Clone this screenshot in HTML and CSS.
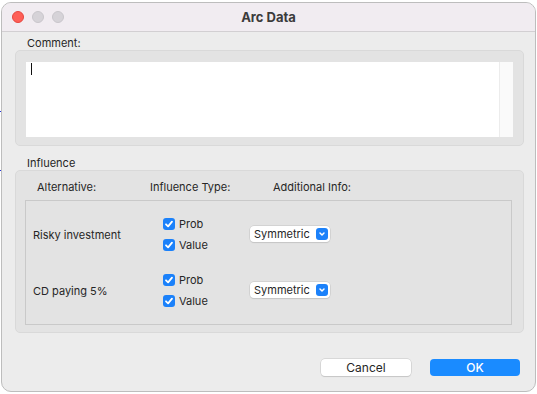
FILE: index.html
```html
<!DOCTYPE html>
<html>
<head>
  <meta charset="utf-8">
  <title>Arc Data</title>
  <link rel="stylesheet" href="styles.css">
</head>
<body>

  <div class="behind">
    <span class="mark mark-a"></span>
    <span class="mark mark-b"></span>
  </div>

  <div class="window">

    <div class="titlebar">
      <div class="lights">
        <span class="light red"></span>
        <span class="light"></span>
        <span class="light"></span>
      </div>
      <div class="title">Arc Data</div>
    </div>

    <div class="content">

      <p class="caption">Comment:</p>
      <div class="group comment-group">
        <div class="textarea">
          <div class="text"><span class="caret"></span></div>
          <div class="scroller"></div>
        </div>
      </div>

      <p class="caption influence-caption">Influence</p>
      <div class="group influence-group">
        <div class="heads">
          <span class="head head-alt">Alternative:</span>
          <span class="head head-type">Influence Type:</span>
          <span class="head">Additional Info:</span>
        </div>
        <div class="table">

          <div class="row">
            <span class="alt">Risky investment</span>
            <div class="checks">
              <label class="check"><span class="box"><svg viewBox="0 0 12 12"><path d="M3 6.3 L5.1 8.4 L9 3.6" /></svg></span>Prob</label>
              <label class="check"><span class="box"><svg viewBox="0 0 12 12"><path d="M3 6.3 L5.1 8.4 L9 3.6" /></svg></span>Value</label>
            </div>
            <div class="popup">
              <span>Symmetric</span>
              <span class="arrow"><svg viewBox="0 0 12 12"><path d="M4 5 L6 7 L8 5" /></svg></span>
            </div>
          </div>

          <div class="row">
            <span class="alt">CD paying 5%</span>
            <div class="checks">
              <label class="check"><span class="box"><svg viewBox="0 0 12 12"><path d="M3 6.3 L5.1 8.4 L9 3.6" /></svg></span>Prob</label>
              <label class="check"><span class="box"><svg viewBox="0 0 12 12"><path d="M3 6.3 L5.1 8.4 L9 3.6" /></svg></span>Value</label>
            </div>
            <div class="popup">
              <span>Symmetric</span>
              <span class="arrow"><svg viewBox="0 0 12 12"><path d="M4 5 L6 7 L8 5" /></svg></span>
            </div>
          </div>

        </div>
      </div>

      <div class="buttons">
        <button class="btn">Cancel</button>
        <button class="btn default">OK</button>
      </div>

    </div>
  </div>

</body>
</html>
```

FILE: styles.css
```css
* {
  box-sizing: border-box;
}
body {
  margin: 0px;
  background-color: #fff;
  font-family: Inter, 'Liberation Sans', sans-serif;
  font-size: 11px;
  color: #262626;
  height: 394px;
  overflow: hidden;
  position: relative;
}
.behind {
  position: absolute;
  left: 0px;
  top: 0px;
  width: 3px;
  height: 394px;
}
.mark {
  position: absolute;
  left: 0px;
  width: 2px;
  height: 1px;
  background: #2233dd;
}
.mark-a {
  top: 111px;
}
.mark-b {
  top: 170px;
}
.window {
  position: relative;
  margin: 2px 1px 0px 1px;
  height: 390px;
  border: 1px solid #bdbdbd;
  border-radius: 10px;
  background: #ececec;
  overflow: hidden;
  display: flex;
  flex-direction: column;
}
.titlebar {
  height: 29px;
  flex: none;
  background: #f1ecf1;
  border-bottom: 1px solid #d2cfd2;
  display: flex;
  align-items: center;
  position: relative;
}
.lights {
  display: flex;
  gap: 8px;
  padding-left: 10px;
}
.light {
  width: 12px;
  height: 12px;
  border-radius: 50%;
  background: #d6d3d8;
  border: 1px solid #c9c6cb;
}
.light.red {
  background: #fe5f57;
  border-color: #e5463f;
}
.title {
  position: absolute;
  left: 0px;
  right: 0px;
  text-align: center;
  font-size: 13px;
  font-weight: 700;
  color: #3b3b3b;
}
.content {
  padding: 0px 11px 0px 13px;
  flex: 1;
  display: flex;
  flex-direction: column;
}
.caption {
  margin: 5px 0px 0px 12px;
  height: 13px;
  line-height: 13px;
}
.group {
  background: #e3e3e3;
  border: 1px solid #d9d9d9;
  border-radius: 5px;
  flex: none;
}
.comment-group {
  height: 96px;
  padding: 11px 10px 8px 10px;
}
.textarea {
  display: flex;
  height: 75px;
  background: #fff;
}
.text {
  flex: 1;
  padding: 1px 0px 0px 5px;
}
.caret {
  display: block;
  width: 1px;
  height: 12px;
  background: #111;
}
.scroller {
  width: 14px;
  background: #fafafa;
  border-left: 1px solid #ececec;
}
.influence-caption {
  margin-top: 10px;
  height: 14px;
  line-height: 14px;
}
.influence-group {
  height: 163px;
  padding: 0px 11px 0px 9px;
}
.heads {
  display: flex;
  height: 29px;
  align-items: center;
  padding: 3px 0px 0px 12px;
}
.head-alt {
  width: 113px;
}
.head-type {
  width: 123px;
}
.table {
  border: 1px solid #c9c9c9;
  height: 125px;
  padding: 17px 0px 0px 7px;
  display: flex;
  flex-direction: column;
  gap: 23px;
}
.row {
  display: flex;
  align-items: center;
  height: 33px;
}
.alt {
  width: 130px;
}
.checks {
  width: 87px;
  display: flex;
  flex-direction: column;
  gap: 9px;
}
.check {
  display: flex;
  align-items: center;
  height: 12px;
  gap: 4px;
}
.box {
  width: 12px;
  height: 12px;
  border-radius: 3px;
  background: #1b81fa;
  display: flex;
}
.box svg {
  width: 12px;
  height: 12px;
}
.box path {
  fill: none;
  stroke: #fff;
  stroke-width: 1.8;
  stroke-linecap: round;
  stroke-linejoin: round;
}
.popup {
  width: 80px;
  height: 16px;
  background: #fff;
  border-radius: 4px;
  box-shadow: 0px 0px 0px 0.5px #c4c4c4, 0px 1px 1px rgba(0, 0, 0, 0.12);
  display: flex;
  align-items: center;
  justify-content: space-between;
  padding: 0px 2px 0px 4px;
  margin-top: -1px;
}
.arrow {
  width: 12px;
  height: 12px;
  border-radius: 3px;
  background: #1b81fa;
  display: flex;
}
.arrow svg {
  width: 12px;
  height: 12px;
}
.arrow path {
  fill: none;
  stroke: #fff;
  stroke-width: 1.5;
  stroke-linecap: round;
  stroke-linejoin: round;
}
.buttons {
  display: flex;
  justify-content: flex-end;
  gap: 19px;
  margin-top: 26px;
  padding-right: 4px;
}
.btn {
  width: 90px;
  height: 17px;
  padding: 0px;
  font-family: Inter, 'Liberation Sans', sans-serif;
  font-size: 12px;
  line-height: 17px;
  color: #262626;
  background: #fff;
  border: none;
  border-radius: 4px;
  box-shadow: 0px 0px 0px 0.5px #c4c4c4, 0px 1px 1px rgba(0, 0, 0, 0.15);
}
.btn.default {
  background: #1a8bff;
  color: #fff;
  font-weight: 500;
  box-shadow: none;
}
```
